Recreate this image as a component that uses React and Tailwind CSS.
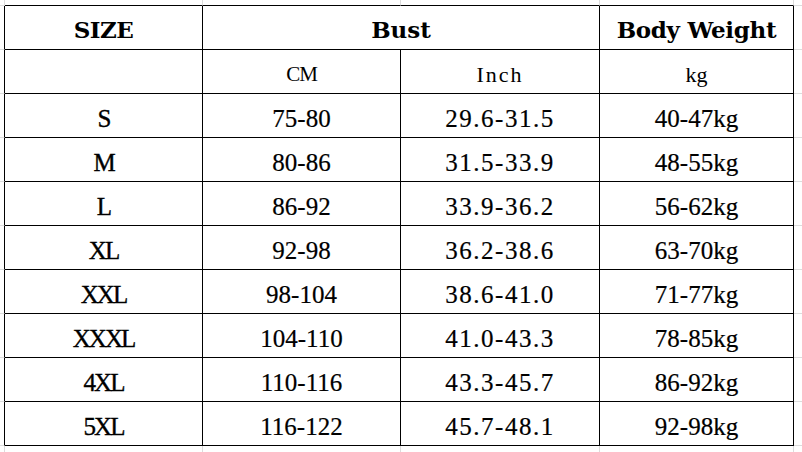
const rows = [
  ['S', '75-80', '29.6-31.5', '40-47kg'],
  ['M', '80-86', '31.5-33.9', '48-55kg'],
  ['L', '86-92', '33.9-36.2', '56-62kg'],
  ['XL', '92-98', '36.2-38.6', '63-70kg'],
  ['XXL', '98-104', '38.6-41.0', '71-77kg'],
  ['XXXL', '104-110', '41.0-43.3', '78-85kg'],
  ['4XL', '110-116', '43.3-45.7', '86-92kg'],
  ['5XL', '116-122', '45.7-48.1', '92-98kg'],
]

const cell = 'flex items-center justify-center border-r border-b border-black pt-[6px] text-black'
const serif = "font-['Liberation_Serif',serif]"
const head = "font-['DejaVu_Serif',serif] font-bold text-[23px]"
const faint = 'border-[#dcdcdc]'

export default function App() {
  return (
    <div className="w-[802px] h-[452px] bg-white overflow-hidden">
      <div className="grid grid-cols-[5px_198px_198px_199px_194px_8px] grid-rows-[6px_repeat(10,44px)_6px]">
        {/* top margin */}
        <div className={`border-b border-r ${faint}`} />
        <div className="border-b border-black border-r border-r-[#dcdcdc]" />
        <div className="border-b border-black border-r border-r-[#dcdcdc]" />
        <div className="border-b border-black border-r border-r-[#dcdcdc]" />
        <div className="border-b border-black border-r border-r-[#dcdcdc]" />
        <div className={`border-b ${faint}`} />

        {/* header row */}
        <div className="border-r border-black border-b border-b-[#dcdcdc]" />
        <div className={`${cell} ${head} tracking-[-0.5px]`}>SIZE</div>
        <div className={`${cell} ${head} tracking-[0px] col-span-2`}>Bust</div>
        <div className={`${cell} ${head} tracking-[-0.3px]`}>Body Weight</div>
        <div className={`border-b ${faint}`} />

        {/* units row */}
        <div className="border-r border-black border-b border-b-[#dcdcdc]" />
        <div className={cell} />
        <div className={`${cell} ${serif} text-[21px] tracking-[-1px]`}>CM</div>
        <div className={`${cell} ${serif} text-[22px] tracking-[2px]`}>Inch</div>
        <div className={`${cell} ${serif} text-[22px]`}>kg</div>
        <div className={`border-b ${faint}`} />

        {rows.map((r) => (
          <Row key={r[0]} r={r} />
        ))}

        {/* bottom margin */}
        <div className={`border-r ${faint}`} />
        <div className={`border-r ${faint}`} />
        <div className={`border-r ${faint}`} />
        <div className={`border-r ${faint}`} />
        <div className={`border-r ${faint}`} />
        <div />
      </div>
    </div>
  )
}

function Row({ r }) {
  return (
    <>
      <div className="border-r border-black border-b border-b-[#dcdcdc]" />
      <div className={`${cell} ${serif} text-[25px] tracking-[-2px] [-webkit-text-stroke:0.35px_#000]`}>{r[0]}</div>
      <div className={`${cell} ${serif} text-[25px] [-webkit-text-stroke:0.2px_#000]`}>{r[1]}</div>
      <div className={`${cell} ${serif} text-[25px] tracking-[1.5px] [-webkit-text-stroke:0.2px_#000]`}>{r[2]}</div>
      <div className={`${cell} ${serif} text-[25px] [-webkit-text-stroke:0.2px_#000]`}>{r[3]}</div>
      <div className={`border-b ${faint}`} />
    </>
  )
}
